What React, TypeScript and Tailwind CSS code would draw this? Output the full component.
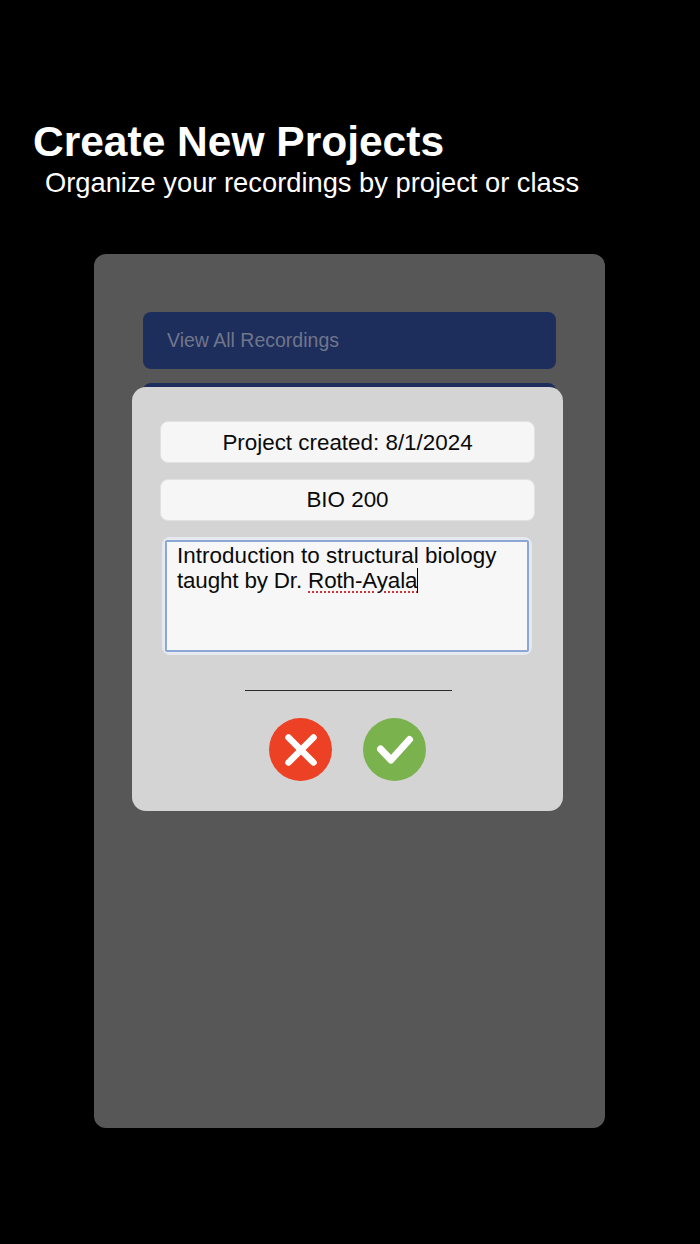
export default function App() {
  return (
    <div className="w-[700px] h-[1244px] bg-black flex flex-col font-['Liberation_Sans',Arial,sans-serif] overflow-hidden">
      <div className="pt-[119px] h-[254px] text-white">
        <h1 className="pl-[33px] text-[42.5px] leading-[46px] font-bold whitespace-nowrap">Create New Projects</h1>
        <p className="pl-[45px] text-[27.3px] leading-[32px] mt-[2px] whitespace-nowrap">Organize your recordings by project or class</p>
      </div>

      <div className="relative ml-[94px] w-[511px] h-[874px] bg-[#575757] rounded-[12px]">
        <div className="pt-[58px] px-[49px] flex flex-col gap-[14px]">
          <div className="h-[57px] bg-[#1d2d5c] rounded-[8px] pl-[24px] flex items-center text-[19.5px] text-[#70768a]">
            View All Recordings
          </div>
          <div className="h-[57px] bg-[#1d2d5c] rounded-[8px]" />
        </div>

        {/* dialog */}
        <div className="absolute left-[38px] top-[133px] w-[431px] h-[424px] bg-[#d4d4d4] rounded-[14px] flex flex-col">
          <div className="mt-[34px] mx-[28px] w-[375px] h-[42px] pt-[2px] bg-[#f6f6f6] border border-[#e2e2e2] rounded-[8px] flex items-center justify-center text-[22.4px] text-[#0a0a0a]">
            Project created: 8/1/2024
          </div>
          <div className="mt-[16px] mx-[28px] w-[375px] h-[42px] bg-[#f6f6f6] border border-[#e2e2e2] rounded-[8px] flex items-center justify-center text-[22.4px] text-[#0a0a0a]">
            BIO 200
          </div>
          <div className="mt-[16px] ml-[30px] w-[370px] h-[118px] p-[3px] bg-[#e6e9ef] rounded-[8px]">
            <div className="w-full h-full bg-[#f7f7f8] border-2 border-[#8ba8d4] rounded-[2px] pl-[10px] pt-[1px] text-[22.4px] leading-[25px] text-[#0a0a0a]">
              <div className="whitespace-nowrap tracking-[0.06px]">Introduction to structural biology</div>
              <div className="flex items-start">
                <span className="tracking-[-0.15px]">taught by Dr.&nbsp;</span>
                <span className="tracking-[-0.1px] underline decoration-dotted decoration-[#d0353a] decoration-2 underline-offset-[3px]">Roth-Ayala</span>
                <span className="w-[1px] h-[25px] bg-black" />
              </div>
            </div>
          </div>
          <div className="mt-[35px] ml-[113px] w-[207px] h-[1px] bg-[#2b2b2b]" />
          <div className="mt-[27px] ml-[137px] flex gap-[31px]">
            <button className="w-[63px] h-[63px] rounded-full bg-[#ec4125] flex items-center justify-center">
              <svg width="34" height="34" viewBox="0 0 34 34" fill="none" stroke="white" strokeWidth="6.5" strokeLinecap="round">
                <path d="M4.5 4.5 L29.5 29.5" />
                <path d="M29.5 4.5 L4.5 29.5" />
              </svg>
            </button>
            <button className="w-[63px] h-[63px] rounded-full bg-[#7ab24e] flex items-center justify-center">
              <svg width="38" height="30" viewBox="0 0 38 30" fill="none" stroke="white" strokeWidth="7" strokeLinecap="round" strokeLinejoin="round">
                <path d="M4.5 14 L15 25 L33.5 4.5" />
              </svg>
            </button>
          </div>
        </div>
      </div>
    </div>
  )
}
